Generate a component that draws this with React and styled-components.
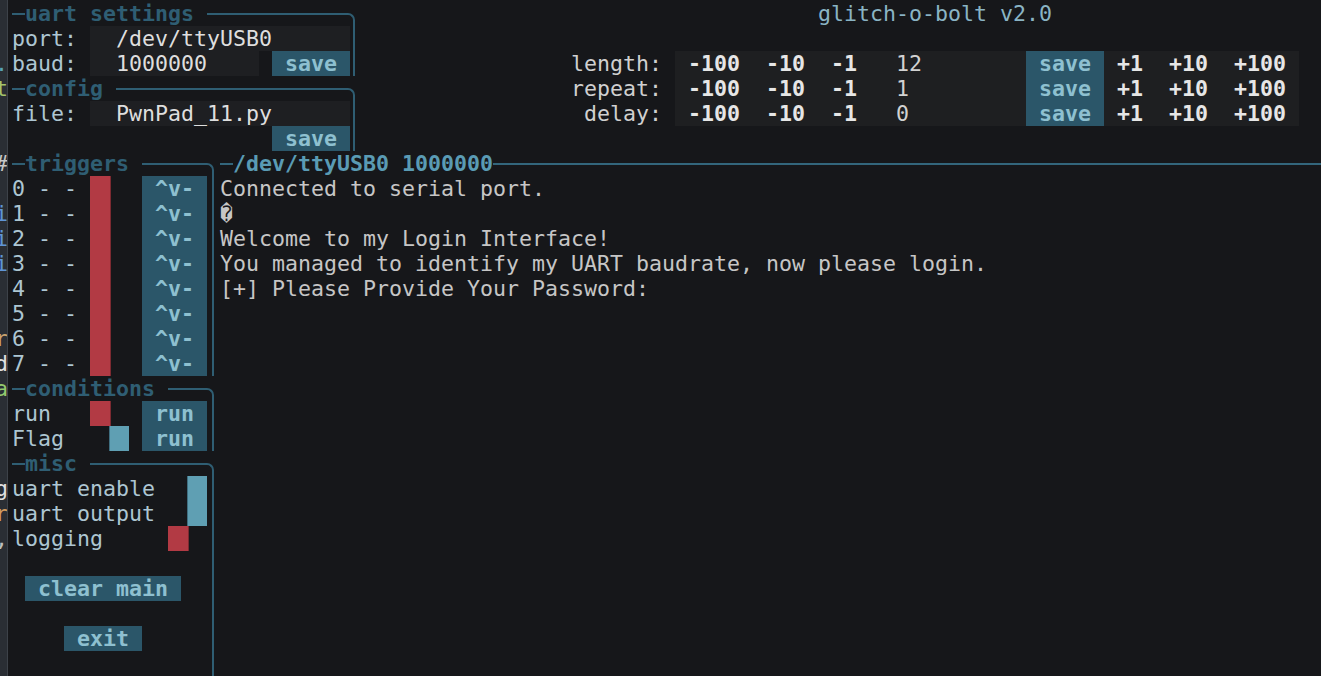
import React from "react";
import styled, { createGlobalStyle } from "styled-components";

// terminal cell size
const C = 13;
const cells = (n) => `${n * C}px`;

const GlobalStyle = createGlobalStyle`
  html, body {
    margin: 0;
    padding: 0;
    background: #16171a;
  }
  body {
    font-family: "DejaVu Sans Mono", "Liberation Mono", monospace;
    font-size: 21.6px;
    line-height: 25px;
  }
  * { box-sizing: border-box; }
`;

const Screen = styled.div`
  display: flex;
  width: 1321px;
  height: 676px;
  overflow: hidden;
  background: #16171a;
  color: #c6c6c6;
`;

/* neighbouring pane, cut off at the left edge */
const Strip = styled.div`
  flex: none;
  width: 8px;
  padding-top: 1px;
  background: #2a2e34;
  border-right: 1px solid #3d4249;
  overflow: hidden;
`;

const StripRow = styled.div`
  height: 25px;
  display: flex;
  justify-content: flex-end;
  color: ${(p) => p.$color || "#d8d8d8"};
  span { margin-right: -1px; }
`;

const Term = styled.div`
  flex: 1;
  min-width: 0;
  display: flex;
  flex-direction: column;
  padding: 1px 0 0 4px;
`;

const Top = styled.div`
  display: flex;
  height: 150px;
  flex: none;
`;

const Bottom = styled.div`
  display: flex;
  flex: 1;
  min-height: 0;
`;

const SettingsCol = styled.div`
  width: 343px;
  flex: none;
  display: flex;
  flex-direction: column;
`;

const Sidebar = styled.div`
  width: 202px;
  flex: none;
  display: flex;
  flex-direction: column;
`;

const Box = styled.section`
  display: flex;
  flex-direction: column;
  flex: ${(p) => (p.$grow ? 1 : "none")};
`;

const BoxHead = styled.div`
  display: flex;
  height: 25px;
  font-weight: bold;
  color: ${(p) => p.$title || "#2f5e73"};
  white-space: pre;

  &::before {
    content: "";
    width: 13px;
    height: 2px;
    margin-top: 12px;
    background: ${(p) => p.$line || "#2f5e73"};
  }

  &::after {
    content: "";
    flex: 1;
    margin-left: ${(p) => (p.$open ? "0" : "13px")};
    margin-top: 12px;
    border-top: 2px solid ${(p) => p.$line || "#2f5e73"};
    border-right: ${(p) => (p.$open ? "none" : "2px solid #2f5e73")};
    border-top-right-radius: ${(p) => (p.$open ? "0" : "7px")};
  }
`;

const BoxBody = styled.div`
  flex: 1;
  display: flex;
  flex-direction: column;
  border-right: 2px solid #2f5e73;
`;

const FieldRow = styled.div`
  display: flex;
  height: 25px;
  white-space: pre;
`;

const Label = styled.span`
  width: ${(p) => cells(p.$w)};
  flex: none;
  color: #adc6d2;
`;

const Input = styled.div`
  width: ${(p) => cells(p.$w)};
  flex: none;
  padding-left: 26px;
  background: #1e1f22;
  color: #dedede;
`;

const Button = styled.button`
  width: ${(p) => cells(p.$w)};
  margin-left: ${(p) => cells(p.$at || 0)};
  flex: none;
  height: 25px;
  padding: 0;
  border: none;
  font: inherit;
  font-weight: bold;
  line-height: 25px;
  text-align: center;
  background: #2b5669;
  color: #8ec0d0;
`;

const ToggleGrid = styled.div`
  display: grid;
  grid-template-columns: ${(p) => p.$cols};
  grid-auto-rows: 25px;
  white-space: pre;
`;

const Toggle = styled.div`
  display: flex;
  justify-content: ${(p) => (p.$on ? "flex-end" : "flex-start")};

  &::before {
    content: "";
    width: 19.5px;
    background: ${(p) => (p.$on ? "#5f9fb3" : "#b23a44")};
    border-left: ${(p) => (p.$on ? "1px solid #3f6e80" : "none")};
    border-right: ${(p) => (p.$on ? "none" : "1px solid #7d2a31")};
  }
`;

const Spacer = styled.div`
  height: 25px;
  flex: none;
`;

const RightTop = styled.div`
  flex: 1;
  display: flex;
  flex-direction: column;
`;

const Title = styled.div`
  height: 25px;
  padding-left: 463px;
  color: #8ab4c4;
`;

const Controls = styled.div`
  display: grid;
  grid-template-columns: 307px 624px;
  column-gap: 13px;
  grid-auto-rows: 25px;
  margin-top: 25px;
`;

const CtrlLabel = styled.div`
  text-align: right;
  color: #d0d0d0;
`;

const Panel = styled.div`
  display: flex;
  background: #1e1f21;
  white-space: pre;
`;

const Step = styled.div`
  width: ${(p) => cells(p.$w)};
  text-align: center;
  font-weight: bold;
  color: #e6e6e6;
`;

const Value = styled.div`
  width: ${cells(12)};
  padding-left: 26px;
  color: #d2d2d2;
`;

const Main = styled.div`
  flex: 1;
  min-width: 0;
  margin-left: 6px;
  display: flex;
  flex-direction: column;
`;

const Line = styled.div`
  height: 25px;
  white-space: pre;
  color: #c6c6c6;
`;

const strip = [
  ["", ""], ["", ""], [".", "#5aa5b5"], ["t", "#a4c46a"], ["", ""], ["", ""],
  ["#", "#c8c8c8"], ["", ""], ["i", "#5f95d6"], ["i", "#5f95d6"], ["i", "#5f95d6"],
  ["", ""], ["", ""], ["r", "#c9a26e"], ["d", "#e0e0e0"], ["a", "#93c96e"],
  ["", ""], ["", ""], ["", ""], ["g", "#e0e0e0"], ["r", "#d19a5e"], [",", "#bdbdbd"],
];

const controls = [
  { label: "length:", value: "12" },
  { label: "repeat:", value: "1" },
  { label: "delay:", value: "0" },
];

const log = [
  "Connected to serial port.",
  "\uFFFD",
  "Welcome to my Login Interface!",
  "You managed to identify my UART baudrate, now please login.",
  "[+] Please Provide Your Password:",
];

export default function App() {
  return (
    <Screen>
      <GlobalStyle />
      <Strip>
        {strip.map(([ch, color], i) => (
          <StripRow key={i} $color={color}>
            <span>{ch}</span>
          </StripRow>
        ))}
      </Strip>

      <Term>
        <Top>
          <SettingsCol>
            <Box>
              <BoxHead>uart settings</BoxHead>
              <BoxBody>
                <FieldRow>
                  <Label $w={6}>port:</Label>
                  <Input $w={20}>/dev/ttyUSB0</Input>
                </FieldRow>
                <FieldRow>
                  <Label $w={6}>baud:</Label>
                  <Input $w={13}>1000000</Input>
                  <Button $w={6} $at={1}>save</Button>
                </FieldRow>
              </BoxBody>
            </Box>
            <Box>
              <BoxHead>config</BoxHead>
              <BoxBody>
                <FieldRow>
                  <Label $w={6}>file:</Label>
                  <Input $w={20}>PwnPad_11.py</Input>
                </FieldRow>
                <FieldRow>
                  <Button $w={6} $at={20}>save</Button>
                </FieldRow>
              </BoxBody>
            </Box>
          </SettingsCol>

          <RightTop>
            <Title>glitch-o-bolt v2.0</Title>
            <Controls>
              {controls.map((c) => (
                <React.Fragment key={c.label}>
                  <CtrlLabel>{c.label}</CtrlLabel>
                  <Panel>
                    <Step $w={6}>-100</Step>
                    <Step $w={5}>-10</Step>
                    <Step $w={4}>-1</Step>
                    <Value>{c.value}</Value>
                    <Button $w={6}>save</Button>
                    <Step $w={4}>+1</Step>
                    <Step $w={5}>+10</Step>
                    <Step $w={6}>+100</Step>
                  </Panel>
                </React.Fragment>
              ))}
            </Controls>
          </RightTop>
        </Top>

        <Bottom>
          <Sidebar>
            <Box>
              <BoxHead>triggers</BoxHead>
              <BoxBody>
                <ToggleGrid $cols="78px 39px 13px 65px">
                  {[0, 1, 2, 3, 4, 5, 6, 7].map((n) => (
                    <React.Fragment key={n}>
                      <Label $w={6}>{`${n} - -`}</Label>
                      <Toggle />
                      <span />
                      <Button $w={5}>^v-</Button>
                    </React.Fragment>
                  ))}
                </ToggleGrid>
              </BoxBody>
            </Box>
            <Box>
              <BoxHead>conditions</BoxHead>
              <BoxBody>
                <ToggleGrid $cols="78px 39px 13px 65px">
                  <Label $w={6}>run</Label>
                  <Toggle />
                  <span />
                  <Button $w={5}>run</Button>
                  <Label $w={6}>Flag</Label>
                  <Toggle $on />
                  <span />
                  <Button $w={5}>run</Button>
                </ToggleGrid>
              </BoxBody>
            </Box>
            <Box $grow>
              <BoxHead>misc</BoxHead>
              <BoxBody>
                <ToggleGrid $cols="156px 39px">
                  <Label $w={12}>uart enable</Label>
                  <Toggle $on />
                  <Label $w={12}>uart output</Label>
                  <Toggle $on />
                  <Label $w={12}>logging</Label>
                  <Toggle />
                </ToggleGrid>
                <Spacer />
                <FieldRow>
                  <Button $w={12} $at={1}>clear main</Button>
                </FieldRow>
                <Spacer />
                <FieldRow>
                  <Button $w={6} $at={4}>exit</Button>
                </FieldRow>
              </BoxBody>
            </Box>
          </Sidebar>

          <Main>
            <BoxHead $open $title="#5a9bb4" $line="#33667c">/dev/ttyUSB0 1000000</BoxHead>
            {log.map((l, i) => (
              <Line key={i}>{l}</Line>
            ))}
          </Main>
        </Bottom>
      </Term>
    </Screen>
  );
}
